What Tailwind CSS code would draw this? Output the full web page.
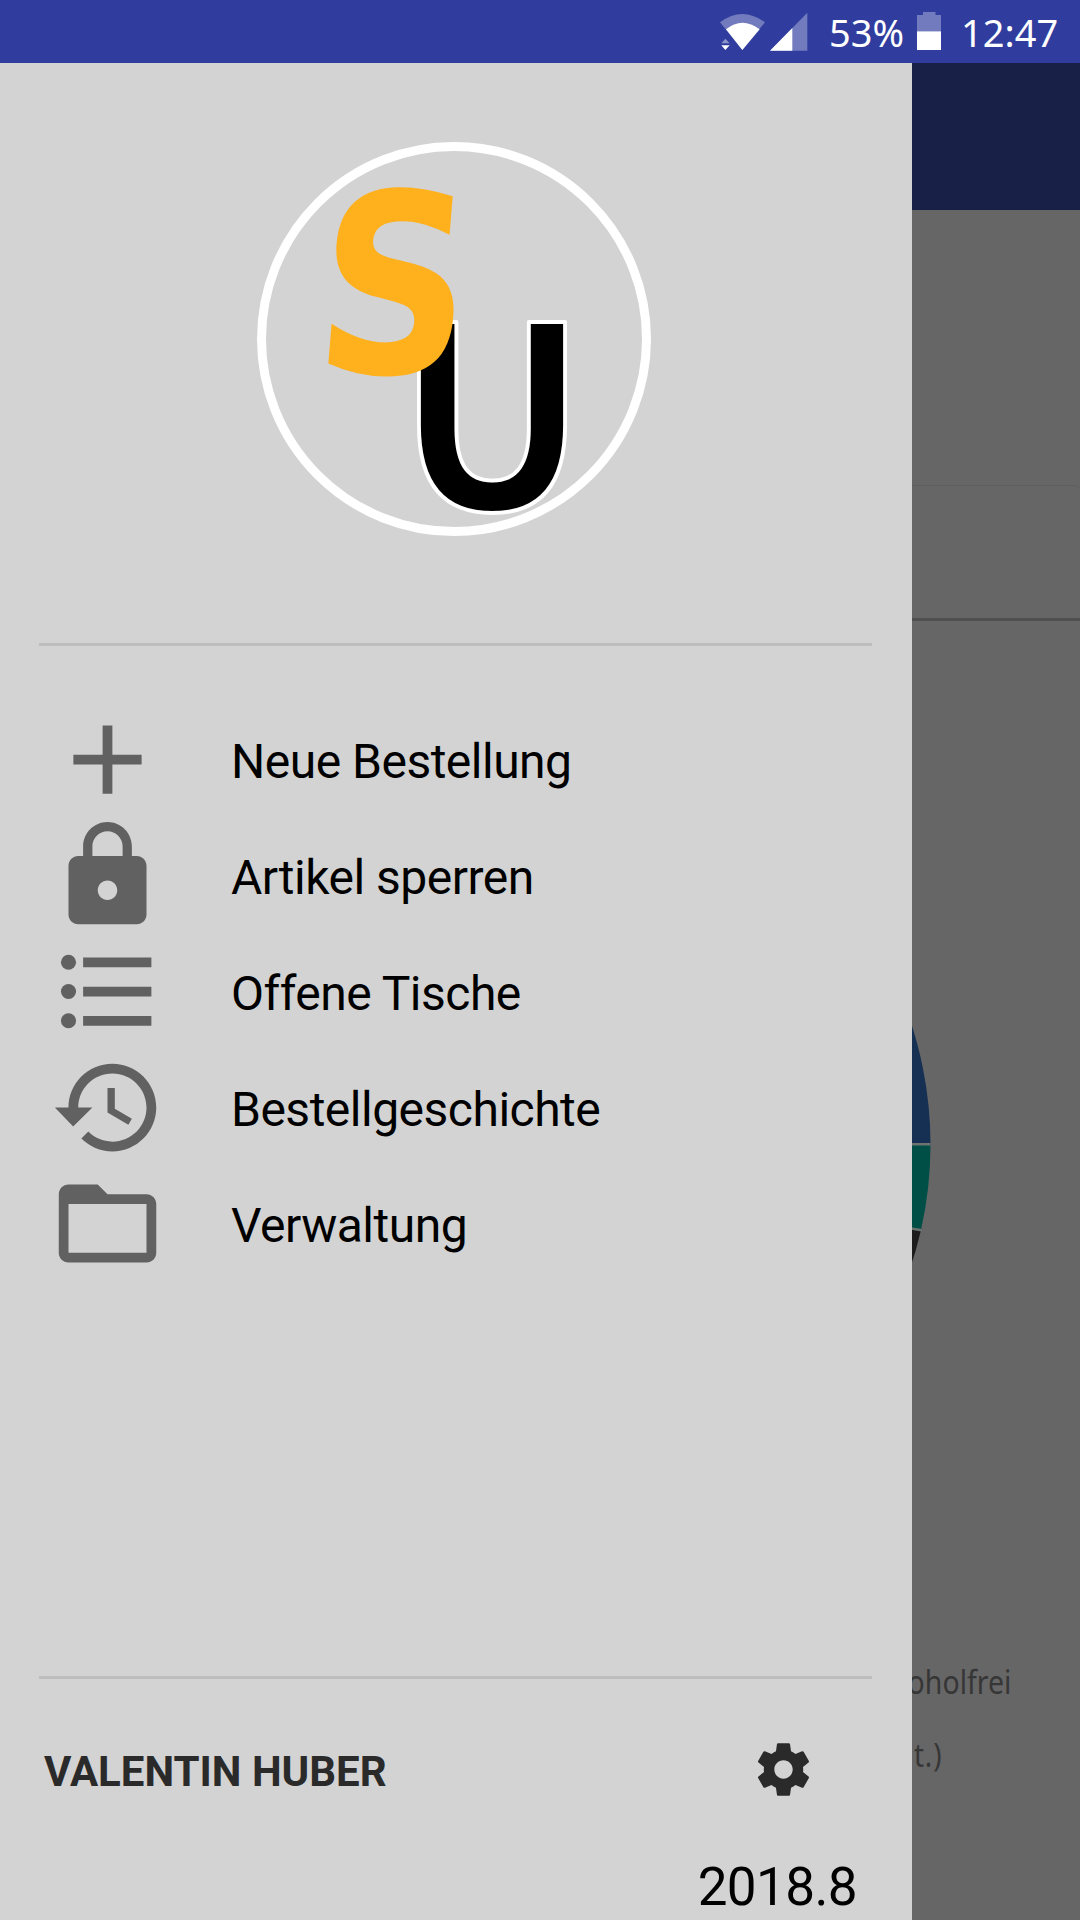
<!DOCTYPE html>
<html lang="de">
<head>
<meta charset="utf-8">
<title>Bestellungen</title>
<script src="https://cdn.jsdelivr.net/npm/@tailwindcss/browser@4"></script>
</head>
<body class="bg-[#666666]">
<div class="relative flex h-[1920px] w-[1080px] flex-col overflow-hidden bg-[#666666] font-['Roboto',sans-serif]">
  <!-- Status bar -->
  <header class="flex h-[63px] shrink-0 bg-[#303d9e] pl-[719px] font-['Noto_Sans',sans-serif] text-[38px] leading-[54px] text-white">
    <svg class="mt-[12px] h-[40px] w-[47px] shrink-0" viewBox="0 0 141 120">
      <path d="M3 31Q70-19 138 31L70 114Z" fill="#fff" fill-opacity=".32"/>
      <path d="M21 52Q70 13 122 52L70 114Z" fill="#fff"/>
      <path d="M5 96L19 76L34 96Z" fill="#303d9e"/>
      <path d="M7 94L19 80L32 94Z" fill="#fff" fill-opacity=".45"/>
      <path d="M7 100H32L19 114Z" fill="#fff"/>
    </svg>
    <svg class="mt-[12px] ml-[4px] h-[40px] w-[38px] shrink-0" viewBox="0 0 114 120">
      <path d="M0 116L112 2V116Z" fill="#fff" fill-opacity=".32"/>
      <path d="M0 116L67 48V116Z" fill="#fff"/>
    </svg>
    <span class="ml-[21px] w-[81px] pt-[5px]">53%</span>
    <svg class="mt-[12px] ml-[7px] h-[38px] w-[24px] shrink-0" viewBox="0 0 24 38">
      <path d="M0 3H6V0H18.500V3H24V19.300H0Z" fill="#fff" fill-opacity=".32"/>
      <path d="M0 19.300H24V38H0Z" fill="#fff"/>
    </svg>
    <span class="ml-[20px] pt-[5px]">12:47</span>
  </header>

  <!-- Dimmed page behind the drawer -->
  <main class="flex flex-1 flex-col">
    <div class="h-[147px] bg-[#192047]"></div>
    <div class="mt-[275px] h-[133px] rounded-tr-[6px] border-t border-[#5e5e5e]"></div>
    <div class="h-[3px] bg-[#4f4f4f]"></div>
    <svg class="mt-[123px] h-[800px] w-[1080px] shrink-0" viewBox="0 744 1080 800">
      <path d="M540 1144L815.770 868.230A390.500 390.500 0 0 1 930.500 1144Z" fill="#153052"/>
      <path d="M540 1144H930.500A390.500 390.500 0 0 1 921 1230Z" fill="#004f47"/>
      <path d="M540 1144L921 1230A390.500 390.500 0 0 1 815.770 1419.770Z" fill="#1c1c1c"/>
      <path d="M880 1144.300H930.500M900 1226.600L921.500 1230.300" stroke="#6c7472" stroke-width="2.400" fill="none"/>
    </svg>
    <div class="mt-[116px] flex flex-col pl-[912px] font-['Noto_Sans',sans-serif] text-[32px] leading-[43px] text-[#363636]">
      <p class="flex h-[73px] w-[99px] justify-end whitespace-nowrap"><span class="origin-right scale-x-[.89]">Alkoholfrei</span></p>
      <p class="flex h-[73px] w-[30px] justify-end whitespace-nowrap"><span class="origin-right scale-x-[.87] tracking-[1px]">(o. Pfandt.)</span></p>
    </div>
  </main>

  <!-- Navigation drawer -->
  <aside class="absolute top-[63px] left-0 flex h-[1857px] w-[912px] flex-col bg-[#d3d3d3] text-black">
    <svg class="mt-[79px] ml-[257px] h-[394px] w-[394px] shrink-0" viewBox="257 142 394 394">
      <circle cx="454" cy="339" r="192.500" fill="none" stroke="#fff" stroke-width="9"/>
      <text transform="translate(396.500 509) scale(1.008 1)" font-family="Noto Sans CJK SC" font-size="253" font-weight="700" fill="#000" stroke="#fff" stroke-width="3.800" stroke-linejoin="round">U</text>
      <text transform="matrix(.85 0 -.08 1 311 372.500)" font-family="DejaVu Sans" font-size="250.500" font-weight="700" fill="#ffb01d">S</text>
    </svg>
    <hr class="mt-[107px] ml-[39px] h-[3px] w-[833px] shrink-0 border-0 bg-[#bebebe]">
    <nav class="mt-[55px] flex flex-col pl-[49px] text-[48px] tracking-[-0.5px] text-black">
      <a class="flex h-[116px] items-center">
        <svg class="h-[117px] w-[117px]" viewBox="0 0 24 24" fill="#616161"><path d="M19 13h-6v6h-2v-6H5v-2h6V5h2v6h6v2z"/></svg>
        <span class="ml-[65px] pt-[5px]">Neue Bestellung</span>
      </a>
      <a class="flex h-[116px] items-center">
        <svg class="h-[117px] w-[117px]" viewBox="0 0 24 24" fill="#616161"><path d="M18 8h-1V6c0-2.760-2.240-5-5-5S7 3.240 7 6v2H6c-1.100 0-2 .9-2 2v10c0 1.100.9 2 2 2h12c1.100 0 2-.9 2-2V10c0-1.100-.9-2-2-2zm-6 9c-1.100 0-2-.9-2-2s.9-2 2-2 2 .9 2 2-.9 2-2 2zm3.100-9H8.900V6c0-1.710 1.390-3.100 3.100-3.100 1.710 0 3.100 1.390 3.100 3.100v2z"/></svg>
        <span class="ml-[65px] pt-[5px]">Artikel sperren</span>
      </a>
      <a class="flex h-[116px] items-center">
        <svg class="h-[117px] w-[117px]" viewBox="0 0 24 24" fill="#616161"><circle cx="4" cy="6" r="1.550"/><circle cx="4" cy="12" r="1.550"/><circle cx="4" cy="18" r="1.550"/><path d="M7 5h14v2H7zM7 11h14v2H7zM7 17h14v2H7z"/></svg>
        <span class="ml-[65px] pt-[5px]">Offene Tische</span>
      </a>
      <a class="flex h-[116px] items-center">
        <svg class="h-[117px] w-[117px]" viewBox="0 0 24 24" fill="#616161"><path d="M13 3c-4.970 0-9 4.030-9 9H1.200l3.760 3.900L8.900 12H6c0-3.870 3.130-7 7-7s7 3.130 7 7-3.130 7-7 7c-1.930 0-3.680-.79-4.940-2.060l-1.420 1.420C8.270 19.990 10.510 21 13 21c4.970 0 9-4.030 9-9s-4.030-9-9-9zm-1 5v5l4.280 2.540.72-1.210-3.500-2.080V8H12z"/></svg>
        <span class="ml-[65px] pt-[5px]">Bestellgeschichte</span>
      </a>
      <a class="flex h-[116px] items-center">
        <svg class="h-[117px] w-[117px]" viewBox="0 0 24 24" fill="#616161"><path d="M20 6h-8l-2-2H4c-1.100 0-1.990.9-1.990 2L2 18c0 1.100.9 2 2 2h16c1.100 0 2-.9 2-2V8c0-1.100-.9-2-2-2zm0 12H4V8h16v10z"/></svg>
        <span class="ml-[65px] pt-[5px]">Verwaltung</span>
      </a>
    </nav>
    <hr class="mt-[395px] ml-[39px] h-[3px] w-[833px] shrink-0 border-0 bg-[#bebebe]">
    <div class="mt-[58px] flex h-[64px] items-center justify-between pr-[97px] pl-[44px]">
      <span class="pt-[4px] text-[42px] font-bold text-[#2a2a2a]">VALENTIN HUBER</span>
      <svg class="h-[63px] w-[63px]" viewBox="0 0 24 24" fill="#2a2a2a"><path d="M19.430 12.980c.04-.32.07-.64.07-.98s-.03-.66-.07-.98l2.110-1.650c.19-.15.24-.42.12-.64l-2-3.460c-.12-.22-.39-.3-.61-.22l-2.490 1c-.52-.4-1.080-.73-1.690-.98l-.38-2.650C14.460 2.180 14.250 2 14 2h-4c-.25 0-.46.18-.49.42l-.38 2.650c-.61.25-1.170.59-1.690.98l-2.490-1c-.23-.09-.49 0-.61.22l-2 3.460c-.13.22-.07.49.12.64l2.110 1.650c-.04.32-.07.65-.07.98s.03.66.07.98l-2.110 1.650c-.19.15-.24.42-.12.64l2 3.460c.12.22.39.3.61.22l2.490-1c.52.4 1.080.73 1.690.98l.38 2.650c.03.24.24.42.49.42h4c.25 0 .46-.18.49-.42l.38-2.650c.61-.25 1.170-.59 1.690-.98l2.490 1c.23.09.49 0 .61-.22l2-3.460c.12-.22.07-.49-.12-.64l-2.110-1.650zM12 15.500c-1.930 0-3.500-1.570-3.500-3.500s1.570-3.500 3.500-3.500 3.500 1.570 3.500 3.500-1.570 3.500-3.500 3.500z"/></svg>
    </div>
    <p class="mt-[56px] pr-[55px] text-right text-[53px] leading-[60px] tracking-[-0.6px]">2018.8</p>
  </aside>
</div>
</body>
</html>
